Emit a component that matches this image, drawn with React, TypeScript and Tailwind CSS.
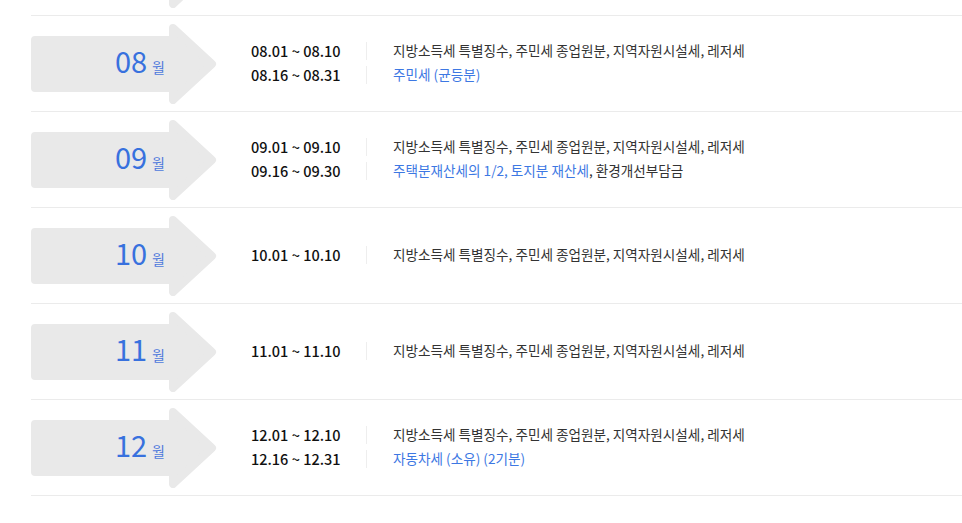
import React from 'react';

// ** types
type Seg = { text: string; blue?: boolean };
type Line = { date: string; segs: Seg[] };
type Month = { month: string; lines: Line[] };

const COMMON = '지방소득세 특별징수, 주민세 종업원분, 지역자원시설세, 레저세';

const months: Month[] = [
  // previous month, only its arrow tip shows at the top edge
  { month: '07', lines: [] },
  {
    month: '08',
    lines: [
      { date: '08.01 ~ 08.10', segs: [{ text: COMMON }] },
      { date: '08.16 ~ 08.31', segs: [{ text: '주민세 (균등분)', blue: true }] },
    ],
  },
  {
    month: '09',
    lines: [
      { date: '09.01 ~ 09.10', segs: [{ text: COMMON }] },
      {
        date: '09.16 ~ 09.30',
        segs: [{ text: '주택분재산세의 1/2, 토지분 재산세', blue: true }, { text: ', 환경개선부담금' }],
      },
    ],
  },
  { month: '10', lines: [{ date: '10.01 ~ 10.10', segs: [{ text: COMMON }] }] },
  { month: '11', lines: [{ date: '11.01 ~ 11.10', segs: [{ text: COMMON }] }] },
  {
    month: '12',
    lines: [
      { date: '12.01 ~ 12.10', segs: [{ text: COMMON }] },
      { date: '12.16 ~ 12.31', segs: [{ text: '자동차세 (소유) (2기분)', blue: true }] },
    ],
  },
];

// arrow badge with month number
const MonthArrow = ({ month, hideLabel }: { month: string; hideLabel?: boolean }) => (
  <div className="relative w-[186px] h-[80px] shrink-0">
    <svg width="186" height="80" viewBox="0 0 186 80" className="absolute inset-0">
      <polygon
        points="4,16 142,16 142,4 181,40 142,76 142,64 4,64"
        fill="#e9e9e9"
        stroke="#e9e9e9"
        strokeWidth="8"
        strokeLinejoin="round"
      />
    </svg>
    {!hideLabel && (
      <div className="absolute left-0 top-[21px] w-[134px] flex items-baseline justify-end">
        <span className="text-[29px] leading-[30px] text-[#3871de]">{month}</span>
        <span className="text-[14px] leading-none text-[#4f7adc] ml-[5px]">월</span>
      </div>
    )}
  </div>
);

const MonthRow = ({ item }: { item: Month }) => (
  <div className="flex items-center h-[96px] border-b border-[#ebebeb]">
    <MonthArrow month={item.month} hideLabel={item.lines.length === 0} />
    <div className="ml-[34px] -mt-[2px] flex flex-col">
      {item.lines.map((line) => (
        <div key={line.date} className="flex items-center h-[24px]">
          <span className="w-[115px] text-[14.5px] font-medium text-[#111]">{line.date}</span>
          <span className="w-px h-[18px] bg-[#eeeeee]" />
          <span className="pl-[26px] text-[13.6px] text-[#333]">
            {line.segs.map((s, i) => (
              <span key={i} className={s.blue ? 'text-[#3d78e3]' : ''}>
                {s.text}
              </span>
            ))}
          </span>
        </div>
      ))}
    </div>
  </div>
);

export default function App() {
  return (
    <div
      className="w-[962px] h-[523px] overflow-hidden bg-white"
      style={{ fontFamily: '"Noto Sans CJK KR", "Noto Sans", sans-serif' }}
    >
      <div className="ml-[31px] -mt-[80px]">
        {months.map((m) => (
          <MonthRow key={m.month} item={m} />
        ))}
      </div>
    </div>
  );
}
